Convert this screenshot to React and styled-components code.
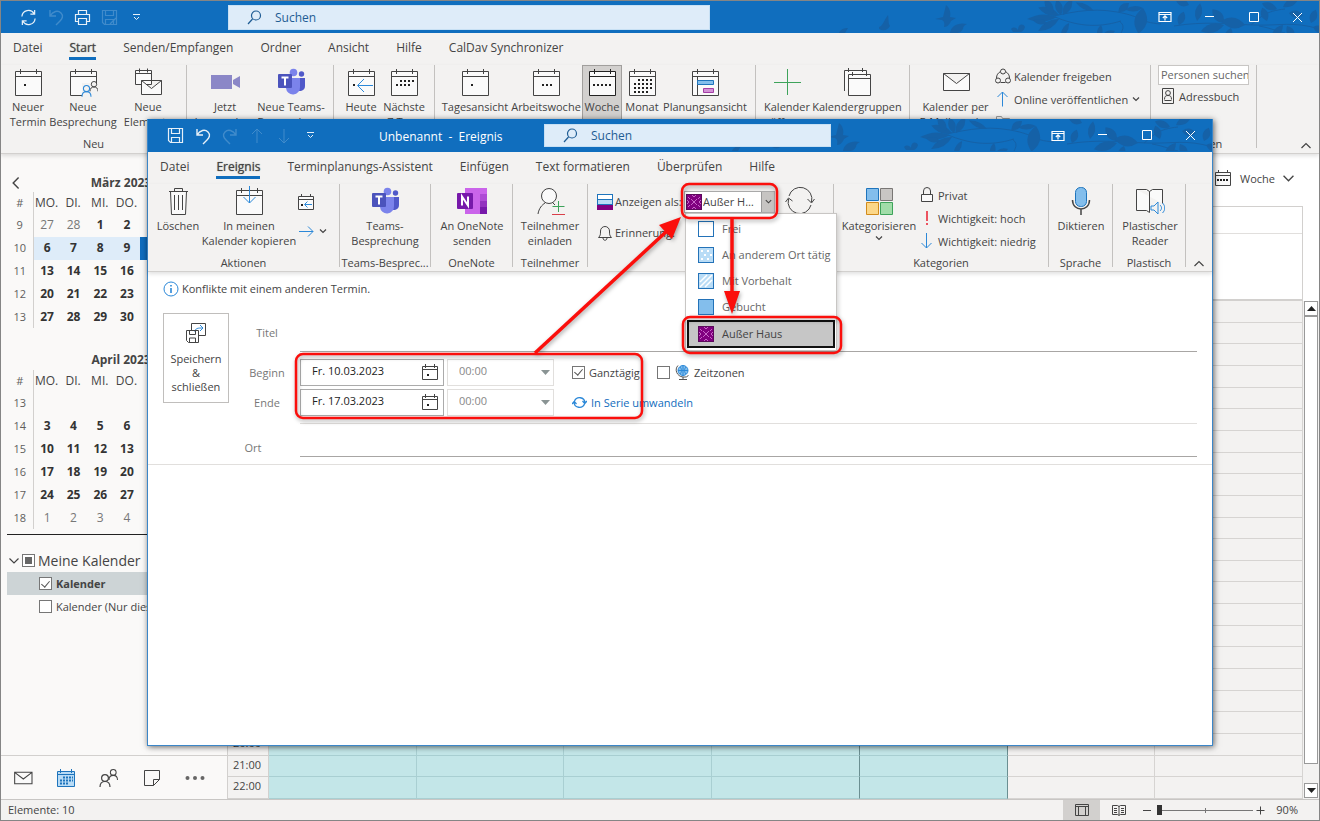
import React, { useState } from "react";
import styled, { createGlobalStyle, css } from "styled-components";

const BLUE = "#106ebe";
const LINE = "#444444";
const SKY = "#2b88d8";
const RED = "#fb0f0c";

const GlobalStyle = createGlobalStyle`
  * { box-sizing: border-box; }
  body { margin: 0; }
  body, button, input, select {
    font-family: "Open Sans", "Noto Sans", sans-serif;
    font-size: 11px;
    color: #444;
  }
  button { background: none; border: none; padding: 0; }
  svg { display: block; flex: none; }
`;

/* ---------- window frame ---------- */

const Desktop = styled.div`
  position: relative;
  display: flex;
  flex-direction: column;
  height: 100vh;
  min-height: 780px;
  border: 1px solid #858585;
  background: #fff;
  overflow: hidden;
`;

const TitleBar = styled.header`
  position: relative;
  display: flex;
  align-items: center;
  flex: none;
  height: ${(p) => (p.$dialog ? 33 : 32)}px;
  background: ${BLUE};
  color: #fff;
`;

const QuickAccess = styled.div`
  display: flex;
  padding-left: 14px;
  width: ${(p) => p.$width}px;
`;

const QuickButton = styled.button`
  display: flex;
  align-items: center;
  justify-content: center;
  width: 27px;
  height: 24px;
  color: #fff;
  opacity: ${(p) => (p.disabled ? 0.2 : 0.9)};
`;

const WindowTitle = styled.h1`
  margin: 0;
  padding-top: 3px;
  width: 165px;
  font-size: 12px;
  font-weight: 400;
  line-height: 32px;
  color: #fff;
  white-space: pre;
`;

const SearchBox = styled.label`
  display: flex;
  align-items: center;
  gap: 13px;
  width: ${(p) => p.$width};
  height: ${(p) => (p.$dialog ? 23 : 25)}px;
  padding-left: 18px;
  background: #deecf9;
  border: 1px solid #c7e0f4;
  color: #1f5c94;
  z-index: 1;

  input {
    flex: 1;
    min-width: 0;
    border: none;
    padding: 0;
    background: none;
    font-size: 12px;
    outline: none;
  }
  input::placeholder {
    color: #1f5c94;
    opacity: 1;
  }
`;

const Foliage = styled.svg`
  position: absolute;
  right: 0;
  top: 0;
`;

const WindowControls = styled.div`
  position: relative;
  display: flex;
  margin-left: auto;
`;

const ControlButton = styled.button`
  display: flex;
  align-items: center;
  justify-content: center;
  width: 44px;
  height: 32px;
  color: #fff;
`;

/* ---------- ribbon ---------- */

const Tabs = styled.nav`
  display: flex;
  flex: none;
  gap: 27px;
  height: 32px;
  padding: 5px 12px 0;
  background: #f3f2f1;
`;

const Tab = styled.button`
  height: 22px;
  border-bottom: 3px solid ${(p) => (p.$active ? BLUE : "transparent")};
  font-size: 12px;
  line-height: 19px;
  white-space: nowrap;
  ${(p) =>
    p.$active &&
    css`
      text-shadow: 0 0 1px #666;
    `}
`;

const RibbonBar = styled.div`
  display: flex;
  flex: none;
  height: ${(p) => (p.$dialog ? 88 : 89)}px;
  background: #f3f2f1;
  border-bottom: 1px solid #d2d0ce;
  box-shadow: 0 2px 4px rgba(0, 0, 0, 0.12);
  z-index: 1;
`;

const Group = styled.section`
  display: flex;
  flex: none;
  flex-direction: column;
  width: ${(p) => p.$width}px;
  height: 83px;
  border-right: 1px solid #c3c1bf;
`;

const GroupBody = styled.div`
  display: flex;
  flex: none;
  height: 71px;
  padding-left: ${(p) => p.$pad || 5}px;
`;

const GroupName = styled.div`
  line-height: 15px;
  text-align: center;
  white-space: nowrap;
`;

const BigButton = styled.button`
  display: flex;
  flex: none;
  flex-direction: column;
  align-items: center;
  width: ${(p) => p.$width}px;
  padding-top: 2px;
  line-height: 15px;
  white-space: pre;
  ${(p) =>
    p.$pressed &&
    css`
      background: #d2d0ce;
      box-shadow: inset 0 0 0 1px #a19f9d;
    `}

  svg { margin-bottom: 2px; }
`;

const ButtonStack = styled.div`
  display: flex;
  flex-direction: column;
  gap: ${(p) => p.$gap || 0}px;
  padding-top: ${(p) => p.$top || 0}px;
`;

const SmallButton = styled.button`
  display: flex;
  align-items: center;
  gap: 3px;
  height: 22px;
  line-height: 15px;
  white-space: nowrap;
  opacity: ${(p) => (p.disabled ? 0.5 : 1)};
`;

const CollapseButton = styled.button`
  align-self: flex-end;
  margin-left: auto;
  padding: 4px 8px 2px;
`;

const PeopleSearch = styled.input`
  width: 91px;
  height: 20px;
  padding: 0 0 2px 2px;
  border: 1px solid #c8c6c4;
  background: #fff;
  &::placeholder { color: #666; opacity: 1; }
`;

/* ---------- calendar window ---------- */

const Body = styled.div`
  display: flex;
  flex: 1;
  min-height: 0;
`;

const Sidebar = styled.aside`
  display: flex;
  flex: none;
  flex-direction: column;
  width: 226px;
  background: #faf9f8;
`;

const MonthHead = styled.div`
  display: grid;
  grid-template-columns: 34px 1fr 20px;
  align-items: center;
  height: ${(p) => (p.$first ? 38 : 42)}px;
  padding: ${(p) => (p.$first ? 20 : 22)}px 8px 0;
  font-size: 12px;
  font-weight: 700;
  line-height: 18px;
  text-align: center;
`;

const MonthTable = styled.table`
  width: 213px;
  height: ${(p) => p.$height}px;
  margin-left: 6px;
  border-collapse: collapse;
  table-layout: fixed;
  flex: none;

  tr { height: 22px; }
  th, td {
    padding: 0;
    text-align: center;
    font-size: 12px;
    line-height: 16px;
    font-weight: 400;
  }
  th:first-child {
    width: 26px;
    border-right: 1px solid #d2d0ce;
    font-size: 11px;
    color: #605e5c;
  }
`;

const Day = styled.td`
  && {
    padding-left: 1px;
    font-weight: ${(p) => (p.$dim ? 400 : 700)};
    color: ${(p) => (p.$dim ? "#777" : "#333")};
    background: ${(p) => (p.$today ? "#0f6cbd" : p.$week ? "#deecf9" : "none")};
  }
`;

const CalendarTree = styled.div`
  margin: 5px 0 0 6px;
  padding-top: 14px;
  border-top: 1px solid #222;
`;

const TreeHead = styled.label`
  display: flex;
  align-items: center;
  gap: 3px;
  height: 23px;
  padding-left: 2px;
  font-size: 14px;
`;

const TreeRow = styled.label`
  display: flex;
  align-items: center;
  gap: 4px;
  height: 23px;
  padding-left: 32px;
  white-space: nowrap;
  font-weight: ${(p) => (p.$selected ? 700 : 400)};
  background: ${(p) => (p.$selected ? "#cdd4d6" : "none")};
`;

const CheckBox = styled.input`
  appearance: none;
  display: grid;
  place-content: center;
  flex: none;
  width: 13px;
  height: 13px;
  margin: 0;
  border: 1px solid #767676;
  background: #fff;

  &:checked::before {
    content: "";
    width: 4px;
    height: 7px;
    margin-bottom: 2px;
    border: solid #555;
    border-width: 0 1px 1px 0;
    transform: rotate(40deg);
  }
  &[data-mixed]::before {
    content: "";
    width: 7px;
    height: 7px;
    background: #666;
  }
`;

const ModuleBar = styled.nav`
  display: flex;
  align-items: center;
  height: 44px;
  margin-top: auto;
  border-top: 1px solid #d2d0ce;

  button {
    display: flex;
    justify-content: center;
    width: 43px;
  }
`;

const CalendarPane = styled.main`
  display: flex;
  flex: 1;
  flex-direction: column;
  min-width: 0;
  border-left: 1px solid #d2d0ce;
`;

const ViewBar = styled.div`
  display: flex;
  flex: none;
  justify-content: flex-end;
  height: 52px;
  padding: 0 25px 4px 0;
`;

const ViewButton = styled.button`
  display: flex;
  align-items: center;
  gap: 8px;
`;

const DayHeader = styled.div`
  display: grid;
  grid-template-rows: 27px 1fr;
  flex: none;
  height: 95px;
  margin-right: 16px;
  border: 1px solid #d2d0ce;
  border-left: none;
  border-bottom: 2px solid #d2d0ce;
`;

const DateStrip = styled.div`
  border-bottom: 1px solid #e1dfdd;
`;

const ScrollArea = styled.div`
  display: flex;
  flex: 1;
  min-height: 0;
`;

const HourGrid = styled.div`
  display: grid;
  grid-auto-rows: 1fr;
  flex: 1;
  min-width: 0;
`;

const HourRow = styled.div`
  display: grid;
  grid-template-columns: 41px repeat(7, 1fr);
  min-height: 0;
  background: #f3f2f1;
`;

const HourLabel = styled.span`
  padding-left: 5px;
  line-height: 17px;
  border: solid #d2d0ce;
  border-width: 0 1px 1px 0;
`;

const Slot = styled.span`
  border: solid ${(p) => (p.$busy ? "#a9cfd2" : "#d6d4d2")};
  border-width: 0 1px 1px 0;
  background: ${(p) => (p.$busy ? "#c3e6e8" : "none")};
  ${(p) =>
    p.$edge &&
    css`
      border-right-color: #6b8f92;
    `}
`;

const ScrollBar = styled.div`
  display: flex;
  flex-direction: column;
  width: 16px;
  padding: 0 1px 1px;
  background: #f3f2f1;

  button {
    display: grid;
    place-items: center;
    height: 15px;
    background: #fff;
    border: 1px solid #999;
  }
`;

const Thumb = styled.div`
  flex: 1;
  margin-bottom: 19px;
  background: #fff;
  border: 1px solid #999;
`;

const StatusBar = styled.footer`
  display: flex;
  align-items: center;
  flex: none;
  height: 21px;
  padding: 0 21px 0 7px;
  background: #f3f2f1;
  border-top: 1px solid #c8c6c4;
  line-height: 18px;
`;

const StatusButton = styled.button`
  display: grid;
  place-items: center;
  width: 37px;
  height: 20px;
  background: ${(p) => (p.$active ? "#d2d0ce" : "none")};
`;

const StatusRight = styled.div`
  display: flex;
  align-items: center;
  margin-left: auto;
`;

const Zoom = styled.input`
  appearance: none;
  width: 96px;
  height: 10px;
  margin: 0 3px 0 0;
  background: linear-gradient(#777, #777) center / 100% 1px no-repeat,
    linear-gradient(#777, #777) center / 1px 5px no-repeat;

  &::-webkit-slider-thumb {
    appearance: none;
    width: 5px;
    height: 10px;
    background: #333;
  }
`;

const ZoomValue = styled.output`
  padding-left: 11px;
`;

/* ---------- event dialog ---------- */

const DialogWindow = styled.div`
  position: absolute;
  top: 118px;
  right: 106px;
  bottom: 74px;
  left: 146px;
  display: flex;
  flex-direction: column;
  border: 1px solid #3b86c8;
  border-top: none;
  background: #fff;
  box-shadow: 1px 1px 6px rgba(0, 0, 0, 0.6);
  z-index: 5;
`;

const StatusField = styled.div`
  display: flex;
  align-items: center;
  height: 31px;
  gap: 2px;
  white-space: nowrap;
`;

const StatusLabel = styled.label`
  width: 67px;
`;

const ShowAsBox = styled.span`
  position: relative;
  display: flex;
  align-items: center;
  width: 91px;
  height: 22px;
  padding-left: 1px;
  border: 1px solid #ababab;
  background: #fff;
`;

const ShowAsSelect = styled.select`
  appearance: none;
  flex: 1;
  min-width: 0;
  height: 20px;
  padding: 0 4px 0 1px;
  border: none;
  background: none;
  overflow: hidden;
  text-overflow: ellipsis;
`;

const DropMark = styled.span`
  display: grid;
  place-items: center;
  flex: none;
  width: 13px;
  height: 20px;
  background: #c6c4c2;
  border-left: 1px solid #999;
`;

const StatusMenu = styled.ul`
  position: absolute;
  top: 21px;
  left: 0;
  width: 152px;
  margin: 0;
  padding: 2px 1px;
  list-style: none;
  background: #fff;
  border: 1px solid #c8c6c4;
  box-shadow: 2px 2px 4px rgba(0, 0, 0, 0.15);
  z-index: 10;
`;

const StatusItem = styled.button`
  display: flex;
  align-items: center;
  gap: 8px;
  width: 100%;
  height: 26px;
  padding-left: ${(p) => (p.$selected ? 9 : 11)}px;
  color: ${(p) => (p.$selected ? "#444" : "#666")};
  ${(p) =>
    p.$selected &&
    css`
      height: 28px;
      background: #c6c6c6;
      border: 2px solid #111;
    `}
`;

const InfoBar = styled.p`
  display: flex;
  align-items: center;
  gap: 3px;
  height: 25px;
  margin: 4px 0 0;
  padding-left: 15px;
`;

const EventForm = styled.form`
  display: grid;
  grid-template-columns: 66px 1fr;
  margin: 0 15px;
  padding-top: 12px;
`;

const SaveButton = styled.button`
  display: flex;
  flex-direction: column;
  align-items: center;
  height: 90px;
  padding-top: 8px;
  border: 1px solid #c0bebc;
  line-height: 14px;
  svg { margin-bottom: 8px; }
`;

const Field = styled.div`
  display: grid;
  grid-template-columns: 71px 1fr;
  align-items: center;
  height: ${(p) => p.$height}px;
`;

const FieldName = styled.label`
  padding-left: 5px;
  text-align: center;
  color: #777;
  ${(p) =>
    p.$outer &&
    css`
      padding: 14px 23px 0 0;
    `}
`;

const LineInput = styled.input`
  width: 100%;
  height: 100%;
  border: none;
  border-bottom: 1px solid #a8a6a4;
  outline: none;
`;

const TimeFields = styled.div`
  padding-top: 5px;
`;

const Controls = styled.div`
  display: flex;
  align-items: center;
`;

const DateBox = styled.span`
  display: flex;
  align-items: center;
  width: 144px;
  height: 27px;
  padding-right: 5px;
  border: 1px solid #ababab;

  input {
    flex: 1;
    min-width: 0;
    height: 22px;
    padding: 0 0 3px 11px;
    border: none;
    color: #222;
  }
`;

const TimeBox = styled.span`
  display: flex;
  align-items: center;
  width: 107px;
  height: 27px;
  margin: 0 18px 0 3px;
  padding-right: 3px;
  border: 1px solid #e1dfdd;

  select {
    appearance: none;
    flex: 1;
    height: 22px;
    padding: 0 0 4px 11px;
    border: none;
    background: none;
    color: #888;
    opacity: 1;
  }
`;

const CheckLabel = styled.label`
  display: flex;
  align-items: center;
  gap: 4px;
  width: ${(p) => p.$width || 85}px;
  white-space: nowrap;
`;

const SeriesLink = styled.a`
  display: flex;
  align-items: center;
  gap: 4px;
  color: #0f6cbd;
  text-decoration: none;
`;

const FormRule = styled.div`
  height: 7px;
  margin-left: 71px;
  border-bottom: 1px solid #e1dfdd;
`;

const PlaceRow = styled.div`
  padding: 0 15px 7px 81px;
  border-bottom: 1px solid #e1dfdd;
`;

const Callouts = styled.svg`
  position: absolute;
  top: 0;
  left: 0;
  pointer-events: none;
  overflow: visible;
  filter: drop-shadow(1px 2px 2px rgba(0, 0, 0, 0.35));
  z-index: 20;
`;

/* ---------- icons ---------- */

function Icon({ size = 30, w, h, children, stroke = "currentColor", fill = "none", sw = 1 }) {
  const width = w || size;
  const height = h || size;
  return (
    <svg
      width={width}
      height={height}
      viewBox={`0 0 ${width} ${height}`}
      fill={fill}
      stroke={stroke}
      strokeWidth={sw}
      aria-hidden="true"
    >
      {children}
    </svg>
  );
}

function dots(list, s = 2) {
  return list.map(([x, y]) => (
    <rect key={x + "-" + y} x={x} y={y} width={s} height={s} fill="#222" stroke="none" />
  ));
}

function CalIcon({ children, line = LINE }) {
  return (
    <Icon stroke={line}>
      <path d="M2.5 4.5h26v24h-26z" fill="#fafafa" />
      <path d="M2.5 9.5h26M7.5 2v5M23.5 2v5" />
      {children}
    </Icon>
  );
}

function SmallCal({ arrow }) {
  return (
    <Icon size={18} stroke={LINE}>
      <path d="M1.5 3.5h15v13h-15zM1.5 6.5h15M4.5 1v3M13.5 1v3" fill="#fafafa" />
      {arrow ? (
        <path d="M15 11.5H8M10.5 8.5l-3 3 3 3" stroke={SKY} />
      ) : (
        dots([[3, 10], [6, 10], [9, 10], [12, 10]])
      )}
      {arrow && dots([[4, 11]])}
    </Icon>
  );
}

function Person({ x, y, color = LINE, k = 1 }) {
  return (
    <g transform={`translate(${x} ${y}) scale(${k})`} stroke={color} strokeWidth={1.2} fill="none">
      <circle cx="5" cy="4" r="3.4" />
      <path d="M0 13c0-4 2-5.5 5-5.5s5 1.5 5 5.5" />
    </g>
  );
}

function TeamsIcon() {
  return (
    <Icon stroke="none">
      <circle cx="17.5" cy="5.5" r="3.8" fill="#7b83eb" />
      <circle cx="25.5" cy="7" r="2.7" fill="#5059c9" />
      <path d="M20 11h9v8a5 5 0 0 1-9 3z" fill="#5059c9" />
      <path d="M10 11h14v9a7 7 0 0 1-14 1z" fill="#7b83eb" />
      <rect x="2" y="7" width="14" height="14" rx="1" fill="#4b53bc" />
      <path d="M5.5 10.5h7M9 10.5v8" stroke="#fff" strokeWidth="2" />
    </Icon>
  );
}

function OneNoteIcon() {
  return (
    <Icon w={32} h={30} stroke="none">
      <path d="M9 2h22v26H9z" fill="#ca64ea" />
      <path d="M24 8h7v7h-7z" fill="#ae4bd5" />
      <path d="M24 15h7v6h-7z" fill="#9332bf" />
      <path d="M24 21h7v7h-7z" fill="#7719aa" />
      <rect x="1" y="7" width="16" height="16" rx="1" fill="#7719aa" />
      <path d="M6 19.5V10.5l6 9V10.5" fill="none" stroke="#fff" strokeWidth="2" />
    </Icon>
  );
}

const chevrons = {
  down: "M2 3.5l3 3 3-3",
  up: "M0.5 7L5 2.5 9.5 7",
  left: "M8 0.5L3.5 5 8 9.5",
  wide: "M0.5 2.5L5 7l4.5-4.5",
};

function Chevron({ dir = "down", size = 10 }) {
  return (
    <svg width={size} height={size} viewBox="0 0 10 10" fill="none" stroke={LINE} strokeWidth="1.2" aria-hidden="true">
      <path d={chevrons[dir]} />
    </svg>
  );
}

function SyncIcon({ w = 18, color = "currentColor" }) {
  return (
    <svg width={w} height={w} viewBox="0 0 18 18" fill="none" stroke={color} strokeWidth="1.3" aria-hidden="true">
      <path d="M2 8a7 7 0 0 1 13-3M16 10a7 7 0 0 1-13 3M15.5 1v4.5H11M2.5 17v-4.5H7" />
    </svg>
  );
}

// round trip arrows of the series link
function SeriesIcon() {
  return (
    <Icon size={15} stroke={SKY} sw={1.3}>
      <path d="M2.5 6a5.5 5.5 0 0 1 10.5 1.5M12.5 9A5.5 5.5 0 0 1 2 7.5M0 9l2.2-2.5L4.5 9M10.5 6l2.3 2.5L15 6" />
    </Icon>
  );
}

function UndoIcon({ flip }) {
  return (
    <Icon size={18} sw={1.4}>
      <path transform={flip ? "translate(18 0) scale(-1 1)" : undefined} d="M3 2v6h6M3 8c3-5 8-6 11-3s1 6-1 8l-4 4" />
    </Icon>
  );
}

function MailIcon({ w = 30, h = 30 }) {
  return (
    <svg width={w} height={h} viewBox="0 0 30 30" fill="#fafafa" stroke={LINE} strokeWidth={w < 30 ? 1.6 : 1} aria-hidden="true">
      <path d="M2.5 6.5h26v17h-26zM2.5 6.5l13 10 13-10" />
    </svg>
  );
}

function SearchIcon() {
  return (
    <Icon size={15} sw={1.2}>
      <circle cx="9" cy="5.5" r="4.5" />
      <path d="M5.5 9L1 14" />
    </Icon>
  );
}

const swatchFill = { free: "#fff", busy: "#83beec", out: "#80007f" };

function StatusSwatch({ kind }) {
  const out = kind === "out";
  return (
    <Icon size={16} stroke={out ? "#5c0a5c" : "#2372b8"}>
      <rect x="0.5" y="0.5" width="15" height="15" fill={swatchFill[kind] || "#b9dcf6"} />
      {kind === "away" &&
        [[3, 3], [9, 3], [6, 7], [12, 7], [3, 11], [9, 11]].map(([x, y]) => (
          <rect key={x + "." + y} x={x} y={y} width="2" height="2" fill="#fff" stroke="none" />
        ))}
      {kind === "tentative" && <path d="M2 9l7-7M2 14L14 2M7 14l7-7" stroke="#fff" strokeWidth="1.5" />}
      {out && (
        <path
          d="M2 3l2 2M12 11l2 2M2 13l2-2M12 5l2-2M6 1l2 2 2-2M6 15l2-2 2 2M1 6l2 2-2 2M15 6l-2 2 2 2M5 5l6 6M11 5l-6 6"
          stroke="#c868c8"
        />
      )}
    </Icon>
  );
}

// x, y, length, angle, width
const leaves = [
  [180, 14, 22, 200, 4], [178, 16, 30, 176, 4], [180, 18, 24, 150, 4], [174, 12, 16, 240, 4], [184, 14, 18, 300, 4],
  [182, 14, 16, 255, 4], [190, 22, 16, 120, 3], [168, 22, 14, 190, 3], [215, 10, 20, 205, 3], [250, 2, 14, 140, 4],
  [222, 24, 14, 100, 3], [236, 30, 14, 160, 3], [264, 7, 26, 100, 7], [264, 7, 18, 175, 3], [300, 24, 14, 290, 4],
  [318, 20, 18, 280, 4], [310, 4, 14, 200, 4], [345, 22, 18, 230, 5], [345, 24, 24, 165, 5], [366, 24, 24, 190, 6],
  [352, 27, 14, 110, 4], [388, 20, 14, 250, 4], [398, 8, 16, 200, 4], [404, 6, 18, 330, 4], [404, 24, 18, 130, 4],
  [408, 25, 14, 60, 4], [410, 12, 14, 10, 4], [434, 26, 14, 20, 4], [432, 22, 14, 290, 4],
];

function TitleArt() {
  return (
    <Foliage width="560" height="32" viewBox="-120 0 560 32" fill="#1561a7" aria-hidden="true">
      {leaves.map(([x, y, len, a, w]) => (
        <path
          key={x + "_" + a}
          transform={`translate(${x} ${y}) rotate(${a})`}
          d={`M0 0Q${len / 2} ${-w * 1.8} ${len} 0Q${len / 2} ${w * 1.8} 0 0`}
        />
      ))}
      <path
        d="M160 18c30-6 50-12 78-7s20 10 44 12M176 16c20 8 40 12 66 4M240 20c6 4 4 8 2 12M295 25c30-5 55-2 80-1s40-4 65 4M372 24c10-8 14-14 34-16M380 25c12 2 20 6 26 7"
        fill="none"
        stroke="#1561a7"
      />
      <path d="M0 26c4-1 5-7 9-12 1 5 0 8 2 11-3 5-7 5-11 3z" />
      <path d="M56 18l8-2 3-12c4 3 5 8 4 12l6 1-5 3c-2 5-5 6-7 6 1-4 0-6-2-7z" />
      <path d="M71 32c1-7 8-11 17-9-3 1-4 3-4 5-2 3-4 4-6 4z" />
      <path d="M132 28c3-3 6-1 7 1 0-6 5-7 7-3-1 3-2 4-4 5h-8z" />
      <path d="M-40 32c1-4 6-5 9-5l-3 5z" />
    </Foliage>
  );
}

/* ---------- shared pieces ---------- */

function ControlBox() {
  return (
    <WindowControls>
      <ControlButton aria-label="Menüband-Anzeigeoptionen">
        <Icon w={14} h={12} sw={1.2}>
          <path d="M1 1.5h12v9H1zM1 3.5h12M7 9.5V5M4.8 7L7 4.8 9.2 7" />
        </Icon>
      </ControlButton>
      <ControlButton aria-label="Minimieren">
        <Icon size={11}><path d="M1 4.5h9" /></Icon>
      </ControlButton>
      <ControlButton aria-label="Maximieren">
        <Icon size={11}><path d="M1.5 0.5h9v9h-9z" /></Icon>
      </ControlButton>
      <ControlButton aria-label="Schließen">
        <Icon size={11}><path d="M1 1l9 9M10 1l-9 9" /></Icon>
      </ControlButton>
    </WindowControls>
  );
}

function QuickMenu() {
  return (
    <QuickButton aria-label="Symbolleiste anpassen">
      <Icon size={9}><path d="M1 1.5h7M2 4l2.5 2.5L7 4" /></Icon>
    </QuickButton>
  );
}

function FloppyIcon({ edit }) {
  return (
    <Icon size={17} sw={1.2}>
      <path d="M1.5 1.5h14v14h-12l-2-2zM4.5 1.5v5h8v-5M4.5 15.5v-5h8v5" />
      {edit && <path d="M9 15l6-6" />}
    </Icon>
  );
}

function RibbonTabs({ items, active }) {
  return (
    <Tabs>
      {items.map((t) => (
        <Tab key={t} $active={t === active}>{t}</Tab>
      ))}
    </Tabs>
  );
}

function RibbonButton({ icon, label, width, pressed, name, children }) {
  return (
    <BigButton $width={width} $pressed={pressed} aria-label={name}>
      {icon}
      {label}
      {children}
    </BigButton>
  );
}

/* ---------- main window parts ---------- */

const monthDots = [];
for (let r = 0; r < 4; r++) {
  for (let c = 0; c < 5; c++) {
    if ((r === 0 && c < 1) || (r === 3 && c > 3)) continue;
    monthDots.push([7 + c * 4, 12 + r * 4]);
  }
}

function MainRibbon() {
  return (
    <RibbonBar>
      <Group $width={186}>
        <GroupBody $pad={7}>
          <RibbonButton width={40} label={"Neuer\nTermin"} icon={<CalIcon>{dots([[11, 17]])}</CalIcon>} />
          <RibbonButton
            width={70}
            label={"Neue\nBesprechung"}
            icon={
              <CalIcon>
                <path d="M14 16h16v14H14z" fill="#f3f2f1" stroke="none" />
                <Person x={22} y={14} k={0.8} />
                <Person x={14} y={18} k={0.9} color={SKY} />
              </CalIcon>
            }
          />
          <RibbonButton
            width={60}
            label={"Neue\nElemente"}
            icon={
              <Icon stroke={LINE} fill="#fafafa">
                <path d="M2.5 3.5h16v14h-16zM2.5 6.5h16M6.5 1.5v4M14.5 1.5v4" />
                <path d="M8.5 13.5h20v14h-20zM8.5 13.5l10 8 10-8" />
              </Icon>
            }
          />
        </GroupBody>
        <GroupName>Neu</GroupName>
      </Group>
      <Group $width={147}>
        <GroupBody $pad={5}>
          <RibbonButton
            width={66}
            label={"Jetzt\nbesprechen"}
            icon={
              <Icon stroke="none" fill="#8b87c7">
                <path d="M1 8h21v14H1zM23 13l7-4v12l-7-4z" />
              </Icon>
            }
          />
          <RibbonButton width={66} label={"Neue Teams-\nBesprechung"} icon={<TeamsIcon />} />
        </GroupBody>
      </Group>
      <Group $width={101}>
        <GroupBody $pad={6}>
          <RibbonButton
            width={42}
            label="Heute"
            icon={
              <CalIcon>
                <path d="M27 18.5H12M18 12l-6.5 6.5L18 25" stroke={SKY} />
                {dots([[7, 17]])}
              </CalIcon>
            }
          />
          <RibbonButton
            width={44}
            label={"Nächste\n7 Tage"}
            icon={<CalIcon>{dots([[11, 13], [15, 13], [19, 13], [23, 13], [7, 17], [11, 17], [15, 17], [19, 17]])}</CalIcon>}
          />
        </GroupBody>
      </Group>
      <Group $width={321}>
        <GroupBody $pad={5}>
          <RibbonButton width={70} label="Tagesansicht" icon={<CalIcon>{dots([[11, 17]])}</CalIcon>} />
          <RibbonButton width={72} label="Arbeitswoche" icon={<CalIcon>{dots([[11, 17], [15, 17], [19, 17]])}</CalIcon>} />
          <RibbonButton
            width={40}
            pressed
            label="Woche"
            icon={<CalIcon line="#222">{dots([[6, 17], [10, 17], [14, 17], [18, 17], [22, 17]])}</CalIcon>}
          />
          <RibbonButton width={40} label="Monat" icon={<CalIcon>{dots(monthDots)}</CalIcon>} />
          <RibbonButton
            width={86}
            label="Planungsansicht"
            icon={
              <CalIcon>
                <path d="M7.5 10v18" />
                <path d="M7.5 13.5h16v4h-16z" fill="#83beec" stroke="#1e74bc" />
                <path d="M13.5 21.5h10v4h-10z" fill="#d392d6" stroke="#a33ea6" />
              </CalIcon>
            }
          />
        </GroupBody>
      </Group>
      <Group $width={154}>
        <GroupBody $pad={7}>
          <RibbonButton
            width={48}
            label={"Kalender\nöffnen"}
            icon={<Icon stroke="#3da35a"><path d="M15.5 2v26M2 15.5h27" /></Icon>}
          />
          <RibbonButton
            width={92}
            label="Kalendergruppen"
            icon={
              <Icon stroke={LINE} fill="#fafafa">
                <path d="M2.5 24V3.5h22V8M6.5 1v4M20.5 1v4" />
                <path d="M6.5 7.5h22v21h-22zM6.5 11.5h22M10.5 5v4M24.5 5v4" />
              </Icon>
            }
          />
        </GroupBody>
      </Group>
      <Group $width={241}>
        <GroupBody $pad={6}>
          <RibbonButton width={79} label={"Kalender per\nE-Mail senden"} icon={<MailIcon />} />
          <ButtonStack $gap={1}>
            <SmallButton>
              <Icon size={16} stroke={LINE}>
                <circle cx="8" cy="3.5" r="2.5" />
                <circle cx="3" cy="12.5" r="2.5" />
                <circle cx="13" cy="12.5" r="2.5" />
                <path d="M5.5 3.5C3 5 1.5 7 1.5 10M10.5 3.5C13 5 14.5 7 14.5 10M5.5 14.5h5" />
              </Icon>
              Kalender freigeben
            </SmallButton>
            <SmallButton>
              <Icon size={16} stroke={SKY}><path d="M7.5 15.5V1M2.5 6l5-5 5 5" /></Icon>
              Online veröffentlichen
              <Chevron />
            </SmallButton>
            <SmallButton disabled>
              <Icon size={16} stroke={LINE}><path d="M1.5 13.5v-11h5l1 2h7v9z" /></Icon>
              Kalenderberechtigungen
            </SmallButton>
          </ButtonStack>
        </GroupBody>
      </Group>
      <Group $width={106}>
        <GroupBody $pad={7}>
          <ButtonStack>
            <PeopleSearch placeholder="Personen suchen" aria-label="Personen suchen" />
            <SmallButton>
              <Icon w={18} h={16} stroke={LINE}>
                <path d="M4.5 0.5h11v15h-11zM6.5 12.5h7" />
                <circle cx="10" cy="5" r="2.4" />
                <path d="M6.5 11.5c0-3 1-4 3.5-4s3.5 1 3.5 4" />
              </Icon>
              Adressbuch
            </SmallButton>
          </ButtonStack>
        </GroupBody>
        <GroupName>Suchen</GroupName>
      </Group>
      <CollapseButton aria-label="Menüband reduzieren"><Chevron dir="up" /></CollapseButton>
    </RibbonBar>
  );
}

const months = [
  {
    name: "März 2023",
    height: 136,
    weeks: [
      [9, 27, 28, 1, 2],
      [10, 6, 7, 8, 9],
      [11, 13, 14, 15, 16],
      [12, 20, 21, 22, 23],
      [13, 27, 28, 29, 30],
    ],
  },
  {
    name: "April 2023",
    height: 159,
    weeks: [
      [13],
      [14, 3, 4, 5, 6],
      [15, 10, 11, 12, 13],
      [16, 17, 18, 19, 20],
      [17, 24, 25, 26, 27],
      [18, 1, 2, 3, 4],
    ],
  },
];

function Month({ month, first }) {
  const last = month.weeks.length - 1;
  return (
    <>
      <MonthHead $first={first}>
        <span>{first && <Chevron dir="left" size={12} />}</span>
        {month.name}
      </MonthHead>
      <MonthTable $height={month.height}>
        <thead>
          <tr>
            {["#", "MO.", "DI.", "MI.", "DO.", "", "", ""].map((d, i) => (
              <th key={i}>{d}</th>
            ))}
          </tr>
        </thead>
        <tbody>
          {month.weeks.map(([week, ...days], w) => (
            <tr key={week}>
              <th>{week}</th>
              {[0, 1, 2, 3, 4, 5, 6].map((i) => (
                <Day
                  key={i}
                  $dim={(first && w === 0 && days[i] > 20) || (!first && w === last)}
                  $week={first && w === 1}
                  $today={first && w === 1 && i === 4}
                >
                  {days[i]}
                </Day>
              ))}
            </tr>
          ))}
        </tbody>
      </MonthTable>
    </>
  );
}

function Navigation() {
  return (
    <Sidebar>
      <Month month={months[0]} first />
      <Month month={months[1]} />
      <CalendarTree>
        <TreeHead>
          <Chevron dir="wide" />
          <CheckBox type="checkbox" data-mixed="true" />
          Meine Kalender
        </TreeHead>
        <TreeRow $selected>
          <CheckBox type="checkbox" defaultChecked />
          Kalender
        </TreeRow>
        <TreeRow>
          <CheckBox type="checkbox" />
          Kalender (Nur dieser Computer)
        </TreeRow>
      </CalendarTree>
      <ModuleBar>
        <button aria-label="E-Mail"><MailIcon w={20} h={20} /></button>
        <button aria-label="Kalender">
          <Icon size={18} stroke="#1e74bc">
            <path d="M0.5 2.5h17v15h-17z" fill="#b9dcf6" />
            <path d="M0.5 5.5h17M3.5 0v4M14.5 0v4" />
            <path d="M6 8.5h10M3 11.5h13M3 14.5h9" strokeWidth="2" strokeDasharray="2 1" />
          </Icon>
        </button>
        <button aria-label="Personen">
          <Icon size={20}>
            <Person x={10} y={1} k={0.85} />
            <Person x={1} y={6} />
          </Icon>
        </button>
        <button aria-label="Notizen">
          <Icon size={18}><path d="M1.5 1.5h15v9l-6 6h-9zM16.5 10.5h-6v6" /></Icon>
        </button>
        <button aria-label="Weitere">
          <Icon w={20} h={6} stroke="none" fill="#666">
            <circle cx="2.5" cy="3" r="2" />
            <circle cx="10" cy="3" r="2" />
            <circle cx="17.5" cy="3" r="2" />
          </Icon>
        </button>
      </ModuleBar>
    </Sidebar>
  );
}

function WeekView() {
  const hours = Array.from({ length: 23 }, (_, h) => h);
  return (
    <CalendarPane>
      <ViewBar>
        <ViewButton>
          <SmallCal />
          Woche
          <Chevron dir="wide" size={11} />
        </ViewButton>
      </ViewBar>
      <DayHeader>
        <DateStrip />
        <div />
      </DayHeader>
      <ScrollArea>
        <HourGrid>
          {hours.map((h) => (
            <HourRow key={h}>
              <HourLabel>{h >= 20 && h + ":00"}</HourLabel>
              {[0, 1, 2, 3, 4, 5, 6].map((d) => (
                <Slot key={d} $busy={d < 5} $edge={d === 3 || d === 4} />
              ))}
            </HourRow>
          ))}
        </HourGrid>
        <ScrollBar>
          <button aria-label="Nach oben">
            <Icon w={9} h={5} fill="#222" stroke="none"><path d="M0 5l4.5-5L9 5z" /></Icon>
          </button>
          <Thumb />
          <button aria-label="Nach unten">
            <Icon w={9} h={5} fill="#222" stroke="none"><path d="M0 0l4.5 5L9 0z" /></Icon>
          </button>
        </ScrollBar>
      </ScrollArea>
    </CalendarPane>
  );
}

function Footer() {
  const [zoom, setZoom] = useState(0);
  return (
    <StatusBar>
      Elemente: 10
      <StatusRight>
        <StatusButton $active aria-label="Normal">
          <Icon w={14} h={12}><path d="M0.5 0.5h13v11h-13zM0.5 2.5h13M3.5 3v9M10.5 3v9" /></Icon>
        </StatusButton>
        <StatusButton aria-label="Lesen">
          <Icon w={14} h={12}>
            <path d="M0.5 1.5h5l1.5 1 1.5-1h5v9h-5l-1.5 1-1.5-1h-5zM7 2v9M2 4.5h3M2 6.5h3M2 8.5h3M9 4.5h3M9 6.5h3M9 8.5h3" />
          </Icon>
        </StatusButton>
        <button aria-label="Verkleinern"><Icon w={20} h={9}><path d="M6 4.5h8" /></Icon></button>
        <Zoom type="range" min="0" max="100" value={zoom} onChange={(e) => setZoom(e.target.value)} aria-label="Zoom" />
        <button aria-label="Vergrößern"><Icon size={9}><path d="M0.5 4.5h8M4.5 0.5v8" /></Icon></button>
        <ZoomValue>90%</ZoomValue>
      </StatusRight>
    </StatusBar>
  );
}

/* ---------- event dialog parts ---------- */

const states = [
  ["free", "Frei"],
  ["away", "An anderem Ort tätig"],
  ["tentative", "Mit Vorbehalt"],
  ["busy", "Gebucht"],
  ["out", "Außer Haus"],
];

function ShowAs() {
  const [state, setState] = useState("out");
  return (
    <ShowAsBox>
      <StatusSwatch kind={state} />
      <ShowAsSelect id="showAs" value={state} onChange={(e) => setState(e.target.value)}>
        {states.map(([kind, name]) => (
          <option key={kind} value={kind}>{name}</option>
        ))}
      </ShowAsSelect>
      <DropMark><Chevron size={9} /></DropMark>
      <StatusMenu>
        {states.map(([kind, name]) => (
          <li key={kind}>
            <StatusItem $selected={kind === state} onClick={() => setState(kind)}>
              <StatusSwatch kind={kind} />
              {name}
            </StatusItem>
          </li>
        ))}
      </StatusMenu>
    </ShowAsBox>
  );
}

function EventRibbon() {
  return (
    <RibbonBar $dialog>
      <Group $width={192}>
        <GroupBody $pad={7}>
          <RibbonButton
            width={46}
            label="Löschen"
            icon={
              <Icon stroke={LINE}>
                <path d="M7.5 5.5l1 23h14l1-23" fill="#fafafa" />
                <path d="M6 5.5h19M11.5 5V2.5h8V5M11.5 9v15M15.5 9v15M19.5 9v15" />
              </Icon>
            }
          />
          <RibbonButton
            width={96}
            label={"In meinen\nKalender kopieren"}
            icon={
              <CalIcon>
                <path d="M15.5 0v17M9.5 11l6 6 6-6" stroke={SKY} />
              </CalIcon>
            }
          />
          <ButtonStack $top={7} $gap={7}>
            <SmallButton aria-label="Kalender"><SmallCal arrow /></SmallButton>
            <SmallButton aria-label="Weiterleiten">
              <Icon size={18} stroke={SKY}><path d="M2 9.5h14M11 4.5l5 5-5 5" /></Icon>
              <Chevron />
            </SmallButton>
          </ButtonStack>
        </GroupBody>
        <GroupName>Aktionen</GroupName>
      </Group>
      <Group $width={91}>
        <GroupBody $pad={5}>
          <RibbonButton width={80} label={"Teams-\nBesprechung"} icon={<TeamsIcon />} />
        </GroupBody>
        <GroupName>Teams-Besprec...</GroupName>
      </Group>
      <Group $width={82}>
        <GroupBody $pad={5}>
          <RibbonButton width={72} label={"An OneNote\nsenden"} icon={<OneNoteIcon />} />
        </GroupBody>
        <GroupName>OneNote</GroupName>
      </Group>
      <Group $width={75}>
        <GroupBody $pad={5}>
          <RibbonButton
            width={64}
            label={"Teilnehmer\neinladen"}
            icon={
              <Icon stroke={LINE}>
                <circle cx="14" cy="10" r="7.5" fill="#fafafa" />
                <path d="M3 28c1-6 4-9 7-11M18 17l2 2" />
                <path d="M23.5 15v11M17.5 20.5h12" stroke="#3da35a" />
                <path d="M17 28.5h13" stroke="#d9404a" />
              </Icon>
            }
          />
        </GroupBody>
        <GroupName>Teilnehmer</GroupName>
      </Group>
      <Group $width={246}>
        <GroupBody $pad={9}>
          <ButtonStack $top={2}>
            <StatusField>
              <Icon size={16} stroke="none">
                <path d="M0 0h16v16H0z" fill="#1e74bc" />
                <path d="M1 1h14v4H1z" fill="#fff" />
                <path d="M1 6h14v4H1z" fill="#b9dcf6" />
                <path d="M0 11h16v5H0z" fill="#80007f" />
              </Icon>
              <StatusLabel htmlFor="showAs">Anzeigen als:</StatusLabel>
              <ShowAs />
            </StatusField>
            <StatusField>
              <Icon size={16} stroke={LINE}>
                <path d="M1.5 12.5c2-2 2-3 2-6.5a4.5 4.5 0 0 1 9 0c0 3.5 0 4.5 2 6.5zM6 13c0 3 4 3 4 0" />
              </Icon>
              Erinnerung:
            </StatusField>
          </ButtonStack>
          <RibbonButton
            width={50}
            name="Serientyp"
            icon={
              <Icon stroke={LINE}>
                <path d="M4 10A11.5 11.5 0 0 1 26.5 16M26 19A11.5 11.5 0 0 1 3.5 13M0.5 16l3-4 4 3M22.5 13l4 4 3-4" />
              </Icon>
            }
          />
        </GroupBody>
      </Group>
      <Group $width={215}>
        <GroupBody $pad={5}>
          <RibbonButton
            width={80}
            label="Kategorisieren"
            icon={
              <Icon>
                <path d="M2.5 2.5h12v12h-12z" fill="#83beec" stroke="#1e74bc" />
                <path d="M16.5 2.5h12v12h-12z" fill="#c8c6c4" stroke="#797775" />
                <path d="M2.5 16.5h12v12h-12z" fill="#fcd788" stroke="#d18b1c" />
                <path d="M16.5 16.5h12v12h-12z" fill="#a1dda9" stroke="#3da35a" />
              </Icon>
            }
          >
            <Chevron />
          </RibbonButton>
          <ButtonStack $gap={1}>
            <SmallButton>
              <Icon w={16} h={16} stroke={LINE}>
                <path d="M2.5 7.5h11v7h-11z" fill="#fafafa" />
                <path d="M4.5 7V4a3.5 3.5 0 0 1 7 0v3" />
              </Icon>
              Privat
            </SmallButton>
            <SmallButton>
              <Icon w={16} h={16} stroke="#e81123" sw={1.4}><path d="M8 1v10M8 13v2" /></Icon>
              Wichtigkeit: hoch
            </SmallButton>
            <SmallButton>
              <Icon w={16} h={16} stroke={SKY}><path d="M7.5 0v15M2.5 10l5 5 5-5" /></Icon>
              Wichtigkeit: niedrig
            </SmallButton>
          </ButtonStack>
        </GroupBody>
        <GroupName>Kategorien</GroupName>
      </Group>
      <Group $width={64}>
        <GroupBody $pad={4}>
          <RibbonButton
            width={56}
            label="Diktieren"
            icon={
              <Icon stroke={LINE}>
                <path d="M6.5 14c0 12 17 12 17 0M15 23v6" strokeWidth="1.5" />
                <rect x="9.5" y="1.5" width="11" height="19" rx="5" fill="#83beec" stroke="#1e74bc" />
              </Icon>
            }
          />
        </GroupBody>
        <GroupName>Sprache</GroupName>
      </Group>
      <Group $width={73}>
        <GroupBody $pad={4}>
          <RibbonButton
            width={66}
            label={"Plastischer\nReader"}
            icon={
              <Icon stroke={LINE}>
                <path d="M1.5 3.5h10l3 2 3-2h10v14M1.5 3.5v21h10l3 2V5.5" fill="#fafafa" />
                <path d="M16 20h3l4-4v12l-4-4h-3zM25 19c2 2 2 4 0 6M27.5 17c3 3 3 7 0 10" stroke={SKY} fill="#f3f2f1" />
              </Icon>
            }
          />
        </GroupBody>
        <GroupName>Plastisch</GroupName>
      </Group>
      <CollapseButton aria-label="Menüband reduzieren"><Chevron dir="up" /></CollapseButton>
    </RibbonBar>
  );
}

function WhenRow({ name, date, id, children }) {
  return (
    <Field $height={30}>
      <FieldName htmlFor={id}>{name}</FieldName>
      <Controls>
        <DateBox>
          <input id={id} defaultValue={date} />
          <Icon size={16} stroke={LINE}>
            <path d="M0.5 2.5h15v13h-15zM0.5 5.5h15M3.5 0v4M12.5 0v4" />
            {dots([[5, 10]])}
          </Icon>
        </DateBox>
        <TimeBox>
          <select disabled aria-label={name + " Uhrzeit"}>
            <option>00:00</option>
          </select>
          <Icon w={9} h={5} fill="#8a9494" stroke="none"><path d="M0 0l4.5 5L9 0z" /></Icon>
        </TimeBox>
        {children}
      </Controls>
    </Field>
  );
}

function EventEditor() {
  return (
    <>
      <InfoBar>
        <Icon size={16} stroke={SKY}>
          <circle cx="8" cy="8" r="7" />
          <path d="M8 7v5M8 4v1.5" strokeWidth="1.6" />
        </Icon>
        Konflikte mit einem anderen Termin.
      </InfoBar>
      <EventForm onSubmit={(e) => e.preventDefault()}>
        <SaveButton>
          <Icon size={22} stroke={LINE}>
            <path d="M6.5 8V1.5h14v12H14" />
            <path d="M10 10c0-4 3-4 8-4M15 3l3 3-3 3" stroke={SKY} />
            <path d="M1.5 8.5h12v12h-10l-2-2zM4.5 8.5v4h6v-4M4.5 20v-4h6v4" fill="#fff" />
          </Icon>
          <span>Speichern</span>
          <span>&amp;</span>
          <span>schließen</span>
        </SaveButton>
        <div>
          <Field $height={39}>
            <FieldName htmlFor="title">Titel</FieldName>
            <LineInput id="title" />
          </Field>
          <TimeFields>
            <WhenRow name="Beginn" id="start" date="Fr. 10.03.2023">
              <CheckLabel>
                <CheckBox type="checkbox" defaultChecked />
                Ganztägig
              </CheckLabel>
              <CheckLabel $width={90}>
                <CheckBox type="checkbox" />
                <Icon size={16} stroke="#555">
                  <circle cx="9" cy="6.5" r="5" fill="#83beec" stroke={SKY} />
                  <path d="M4 6.5h10M9 1.5v10M6 3c2 2 2 5 0 7M12 3c-2 2-2 5 0 7" stroke={SKY} />
                  <path d="M4 1.5c-4 4-1 11 5 11.5s5-2 5-2M9 13v2M5 15.5h8" />
                </Icon>
                Zeitzonen
              </CheckLabel>
            </WhenRow>
            <WhenRow name="Ende" id="end" date="Fr. 17.03.2023">
              <SeriesLink href="#serie">
                <SeriesIcon />
                In Serie umwandeln
              </SeriesLink>
            </WhenRow>
          </TimeFields>
          <FormRule />
        </div>
      </EventForm>
      <PlaceRow>
        <Field $height={33}>
          <FieldName $outer htmlFor="place">Ort</FieldName>
          <LineInput id="place" />
        </Field>
      </PlaceRow>
    </>
  );
}

function EventDialog() {
  return (
    <DialogWindow role="dialog" aria-label="Unbenannt - Ereignis">
      <TitleBar $dialog>
        <TitleArt />
        <QuickAccess $width={231}>
          <QuickButton aria-label="Speichern"><FloppyIcon /></QuickButton>
          <QuickButton aria-label="Rückgängig"><UndoIcon /></QuickButton>
          <QuickButton aria-label="Wiederholen" disabled><UndoIcon flip /></QuickButton>
          <QuickButton aria-label="Vorheriges" disabled>
            <Icon size={16}><path d="M8 15V1M3 6l5-5 5 5" /></Icon>
          </QuickButton>
          <QuickButton aria-label="Nächstes" disabled>
            <Icon size={16}><path d="M8 1v14M3 10l5 5 5-5" /></Icon>
          </QuickButton>
          <QuickMenu />
        </QuickAccess>
        <WindowTitle>{"Unbenannt  -  Ereignis"}</WindowTitle>
        <SearchBox $dialog $width="27%">
          <SearchIcon />
          <input placeholder="Suchen" aria-label="Suchen" />
        </SearchBox>
        <ControlBox />
      </TitleBar>
      <RibbonTabs
        active="Ereignis"
        items={["Datei", "Ereignis", "Terminplanungs-Assistent", "Einfügen", "Text formatieren", "Überprüfen", "Hilfe"]}
      />
      <EventRibbon />
      <EventEditor />
      <Callouts width="720" height="320" fill="none" stroke={RED} strokeWidth="2.5" aria-hidden="true">
        <rect x="148" y="235" width="346" height="64" rx="7" />
        <rect x="534" y="65" width="95" height="34" rx="7" />
        <rect x="535" y="198" width="158" height="36" rx="7" />
        <path d="M387 234L520 111" strokeWidth="3.5" />
        <path d="M533 98l-9 22-13-14z" fill={RED} stroke="none" />
        <path d="M584 99v76" strokeWidth="3.5" />
        <path d="M584 195l-8-23h16z" fill={RED} stroke="none" />
      </Callouts>
    </DialogWindow>
  );
}

export default function App() {
  return (
    <>
      <GlobalStyle />
      <Desktop>
        <TitleBar>
          <TitleArt />
          <QuickAccess $width={227}>
            <QuickButton aria-label="Senden/Empfangen"><SyncIcon w={17} /></QuickButton>
            <QuickButton aria-label="Rückgängig" disabled><UndoIcon /></QuickButton>
            <QuickButton aria-label="Drucken">
              <Icon size={17} sw={1.2}>
                <path d="M4.5 5.5v-4h8v4M4.5 12.5h-3v-7h14v7h-3M4.5 9.5h8v6h-8z" />
              </Icon>
            </QuickButton>
            <QuickButton aria-label="Entwurf" disabled><FloppyIcon edit /></QuickButton>
            <QuickMenu />
          </QuickAccess>
          <SearchBox $width="482px">
            <SearchIcon />
            <input placeholder="Suchen" aria-label="Suchen" />
          </SearchBox>
          <ControlBox />
        </TitleBar>
        <RibbonTabs
          active="Start"
          items={["Datei", "Start", "Senden/Empfangen", "Ordner", "Ansicht", "Hilfe", "CalDav Synchronizer"]}
        />
        <MainRibbon />
        <Body>
          <Navigation />
          <WeekView />
        </Body>
        <Footer />
        <EventDialog />
      </Desktop>
    </>
  );
}
